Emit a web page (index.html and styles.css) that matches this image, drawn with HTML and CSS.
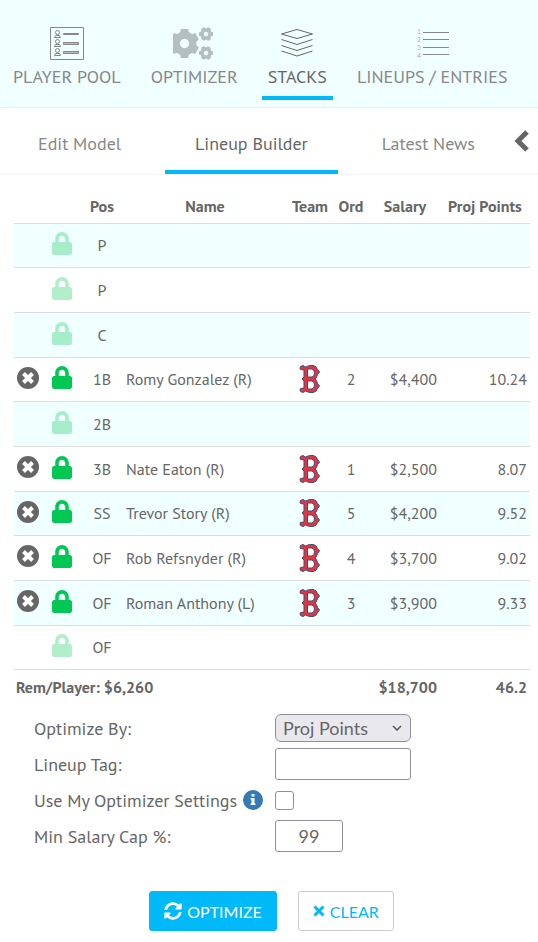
FILE: index.html
```
<!DOCTYPE html>
<html lang="en">
    <head>
        <meta charset="utf-8" />
        <meta name="viewport" content="width=device-width, initial-scale=1" />
        <title>Stacks - Lineup Builder</title>
        <link rel="stylesheet" href="styles.css">
    </head>

    <body>
        <svg class="sprite" aria-hidden="true">
            <symbol id="lock" viewBox="0 0 448 512">
                <path d="M400 224h-24v-72C376 68.2 307.8 0 224 0S72 68.2 72 152v72H48c-26.5 0-48 21.5-48 48v192c0 26.5 21.5 48 48 48h352c26.5 0 48-21.5 48-48V272c0-26.5-21.5-48-48-48zm-104 0H152v-72c0-39.7 32.3-72 72-72s72 32.3 72 72v72z" />
            </symbol>
            <symbol id="remove" viewBox="0 0 22 22">
                <circle cx="11" cy="11" r="11" />
                <path d="M6.5 6.5l9 9M15.5 6.5l-9 9" stroke="#fff" stroke-width="4" />
            </symbol>
            <symbol id="bos" viewBox="0 0 22 30">
                <path d="M1.5 2.5L4 1.5 6.5 3Q10 1 14 1.5 17.5 2 18.5 5.5L20.5 8 18.5 10.5Q18 13.5 16 15 18 16.5 18.5 19.5L20.5 22 18.5 24.5Q17.5 28 14 28.5 10 29 6.5 27L4 28.5 1.5 27.5Q.5 25 1.5 24.5L5 24V17L3 15 5 13V6L1.5 5.5Q.5 4.5 1.5 2.5zM8.5 5V13H13Q15.5 12 15.5 9 15.5 6 13 5zM8.5 17V25H13Q15.5 24 15.5 21 15.5 18 13 17z" fill="#e5343f" fill-rule="evenodd" stroke="#35507d" stroke-linejoin="round" />
            </symbol>
            <symbol id="gear" viewBox="-14 -14 28 28">
                <circle r="8" fill="none" stroke="#b4bfc0" stroke-width="7" />
                <path d="M-3.5-14h7l1 5h-9zM-3.5 14h7l1-5h-9z" />
                <path d="M-3.5-14h7l1 5h-9zM-3.5 14h7l1-5h-9z" transform="rotate(60)" />
                <path d="M-3.5-14h7l1 5h-9zM-3.5 14h7l1-5h-9z" transform="rotate(120)" />
            </symbol>
        </svg>

        <nav class="main-nav">
            <a class="nav-item" href="#pool">
                <svg class="nav-icon" viewBox="0 0 42 36" fill="none" stroke="#888">
                    <path d="M4.5 2.5h33v32h-33z" />
                    <circle cx="11.5" cy="7.5" r="2" />
                    <path d="M8.5 12.5l1-2h4l1 2z" />
                    <circle cx="11.5" cy="16.5" r="2" />
                    <path d="M8.5 21.5l1-2h4l1 2z" />
                    <circle cx="11.5" cy="25.5" r="2" />
                    <path d="M8.5 30.5l1-2h4l1 2z" />
                    <path d="M17.5 8.5h15v1h-15zM17.5 17.5h15v2h-15zM17.5 26.5h15v2h-15z" fill="#bbb" />
                </svg>
                PLAYER POOL
            </a>
            <a class="nav-item" href="#optimizer">
                <svg class="nav-icon" viewBox="3 0 42 36" fill="#b4bfc0">
                    <use href="#gear" x="0" y="4" width="29" height="29" />
                    <use href="#gear" x="-7" y="-7" width="14" height="14" transform="translate(36 9) rotate(30)" />
                    <use href="#gear" x="-7" y="-7" width="14" height="14" transform="translate(36 28) rotate(30)" />
                </svg>
                OPTIMIZER
            </a>
            <a class="nav-item active" href="#stacks">
                <svg class="nav-icon" viewBox="0 0 42 36" fill="none" stroke="#666">
                    <path d="M21 4.5l15.5 4.5L21 13.5 5.5 9zM5.5 14.5L21 19.5l15.5-5M5.5 20.5L21 25.5l15.5-5M5.5 26L21 31l15.5-5" />
                </svg>
                STACKS
            </a>
            <a class="nav-item" href="#lineups">
                <svg class="nav-icon" viewBox="0 0 42 36" stroke="#888">
                    <path d="M12 7.5h26M12 14.5h26M12 22.5h26M12 29.5h26" />
                    <g class="nav-digits">
                        <text x="6" y="9">1</text>
                        <text x="6" y="17">2</text>
                        <text x="6" y="25">3</text>
                        <text x="6" y="33">4</text>
                    </g>
                </svg>
                LINEUPS / ENTRIES
            </a>
        </nav>

        <main class="panel">
            <nav class="tabs">
                <a class="tab" href="#model">Edit Model</a>
                <a class="tab active" href="#builder">Lineup Builder</a>
                <a class="tab" href="#news">Latest News</a>
                <button class="collapse" type="button" aria-label="Collapse">
                    <svg viewBox="0 0 16 24" width="16" height="24"><path d="M13 3L4 12l9 9" fill="none" stroke="#666" stroke-width="5" /></svg>
                </button>
            </nav>

            <table class="lineup">
                <colgroup>
                    <col class="col-remove"><col class="col-lock"><col class="col-pos"><col>
                    <col class="col-team"><col class="col-ord"><col class="col-salary"><col class="col-points">
                </colgroup>
                <thead>
                    <tr><th></th><th></th><th>Pos</th><th>Name</th><th>Team</th><th>Ord</th><th>Salary</th><th>Proj Points</th></tr>
                </thead>
                <tbody id="players"></tbody>
                <tfoot>
                    <tr><td colspan="6">Rem/Player: $6,260</td><td class="num">$18,700</td><td class="num">46.2</td></tr>
                </tfoot>
            </table>

            <form class="settings">
                <label for="optimize-by">Optimize By:</label>
                <div class="select-wrap">
                    <select id="optimize-by"><option>Proj Points</option></select>
                    <svg class="caret" viewBox="0 0 10 6" width="10" height="6"><path d="M1 1l4 4 4-4" fill="none" stroke="#555" stroke-width="1.5" /></svg>
                </div>
                <label for="lineup-tag">Lineup Tag:</label>
                <input id="lineup-tag" class="text-box" type="text">
                <div class="label-info">
                    <label for="use-settings">Use My Optimizer Settings</label>
                    <svg class="info" viewBox="0 0 20 20" width="20" height="20">
                        <circle cx="10" cy="10" r="10" fill="#337ab7" />
                        <path d="M8.5 4h3v2.5h-3zM7.5 8h4v5.5h1V15h-5v-1.5h1v-4h-1z" fill="#fff" />
                    </svg>
                </div>
                <input id="use-settings" class="check" type="checkbox">
                <label for="min-cap">Min Salary Cap %:</label>
                <input id="min-cap" class="text-box short" type="text" value="99">
            </form>

            <div class="actions">
                <button class="btn primary" type="button">
                    <svg viewBox="0 0 512 512" width="18" height="18" fill="currentColor"><path d="M370.72 133.28C339.458 104.008 298.888 87.962 255.848 88c-77.458.068-144.328 53.178-162.791 126.85-1.344 5.363-6.122 9.15-11.651 9.15H24.103c-7.498 0-13.194-6.807-11.807-14.176C33.933 94.924 134.813 8 256 8c66.448 0 126.791 26.136 171.315 68.685L463.03 40.97C478.149 25.851 504 36.559 504 57.941V192c0 13.255-10.745 24-24 24H345.941c-21.382 0-32.09-25.851-16.971-40.971l41.75-41.749zM32 296h134.059c21.382 0 32.09 25.851 16.971 40.971l-41.75 41.75c31.262 29.273 71.835 45.319 114.876 45.28 77.418-.07 144.315-53.144 162.787-126.849 1.344-5.363 6.122-9.15 11.651-9.15h57.304c7.498 0 13.194 6.807 11.807 14.176C478.067 417.076 377.187 504 256 504c-66.448 0-126.791-26.136-171.315-68.685L48.97 471.03C33.851 486.149 8 475.441 8 454.059V320c0-13.255 10.745-24 24-24z" /></svg>
                    OPTIMIZE
                </button>
                <button class="btn" type="button">
                    <svg viewBox="0 0 12 12" width="12" height="12"><path d="M1.5 1.5l9 9M10.5 1.5l-9 9" stroke="currentColor" stroke-width="3" /></svg>
                    CLEAR
                </button>
            </div>
        </main>

        <script src="lineup.js"></script>
    </body>
</html>
```
FILE: styles.css
```
* {
    box-sizing: border-box;
}
body {
    margin: 0;
    background: #f0ffff;
    color: #666;
    font-family: "PT Sans", Lato, sans-serif;
    font-size: 16px;
}
a {
    color: #888;
    text-decoration: none;
}
.sprite {
    display: none;
}
.main-nav {
    display: flex;
    gap: 18px;
    height: 107px;
    padding: 25px 7px 7px;
    font-size: 18px;
    line-height: 24px;
    white-space: nowrap;
}
.nav-item {
    display: flex;
    flex-direction: column;
    align-items: center;
    gap: 4px;
    padding: 0 6px;
    border-bottom: 4px solid transparent;
}
.nav-icon {
    width: 42px;
    height: 36px;
}
.nav-digits {
    font-size: 7px;
    fill: #aaa;
    stroke: none;
}
.main-nav .active,
.tabs .active {
    color: #666;
    border-color: #00b9f9;
}
.panel {
    background: #fff;
    border-top: 1px solid #e8eeee;
    border-radius: 4px 0 0 0;
    padding-bottom: 11px;
}
.tabs {
    display: flex;
    gap: 14px;
    height: 67px;
    padding-left: 8px;
    border-bottom: 1px solid #f3f3f3;
    font-size: 18px;
    white-space: nowrap;
}
.tab {
    padding: 24px 30px 0;
    line-height: 24px;
    border-bottom: 4px solid transparent;
}
.tab:last-of-type {
    padding-right: 22px;
}
.collapse {
    align-self: center;
    display: flex;
    margin: 0 8px 0 auto;
    padding: 0;
    border: 0;
    background: none;
}
.lineup {
    width: calc(100% - 22px);
    margin: 16px 8px 0 14px;
    table-layout: fixed;
    border-collapse: collapse;
    line-height: 20px;
}
.col-remove { width: 28px; }
.col-lock { width: 40px; }
.col-pos { width: 40px; }
.col-team { width: 44px; }
.col-ord { width: 38px; }
.col-salary { width: 70px; }
.col-points { width: 90px; }
.lineup th,
.lineup td {
    padding: 0;
    text-align: center;
    white-space: nowrap;
}
.lineup th {
    height: 32px;
    padding-bottom: 2px;
}
.lineup tbody tr {
    height: 45px;
    border-top: 1px solid #ddd;
}
.lineup tbody tr:nth-child(3n + 1) {
    height: 44px;
}
.lineup tbody tr:nth-child(odd) {
    background: #f0ffff;
}
.lineup tbody .name {
    padding-left: 4px;
    text-align: left;
}
.lineup .num {
    padding-right: 3px;
    text-align: right;
}
.lineup tfoot td {
    height: 36px;
    border-top: 1px solid #ddd;
    font-weight: bold;
}
.lineup tfoot td:first-child {
    padding-left: 2px;
    text-align: left;
}
.icon-btn {
    display: block;
    margin: 0 auto;
    padding: 0 0 3px;
    border: 0;
    background: none;
    fill: #666;
}
.icon-btn svg,
.logo {
    display: block;
    margin: 0 auto;
}
.lock {
    fill: #00c853;
}
.lock.open {
    opacity: 0.3;
}
.settings {
    display: grid;
    grid-template-columns: 241px 1fr;
    grid-auto-rows: 36px;
    align-items: center;
    justify-items: start;
    margin: 5px 34px 0;
    font-size: 18px;
}
.label-info {
    display: flex;
    align-items: center;
    gap: 6px;
}
.select-wrap {
    display: grid;
    align-items: center;
    width: 136px;
}
.select-wrap > * {
    grid-area: 1 / 1;
}
.settings select,
.text-box {
    width: 136px;
    height: 32px;
    padding: 0 7px;
    border: 1px solid #8f8f9d;
    border-radius: 3px;
    background: #fff;
    color: #666;
    font-family: Lato, sans-serif;
    font-size: 18px;
}
.settings select {
    height: 28px;
    border-radius: 6px;
    background: #e9e9ed;
    appearance: none;
}
.caret {
    justify-self: end;
    margin-right: 9px;
    pointer-events: none;
}
.text-box.short {
    width: 68px;
    text-align: center;
}
.check {
    width: 19px;
    height: 19px;
    margin: 0;
    border: 1px solid #8f8f9d;
    border-radius: 3px;
    appearance: none;
}
.actions {
    display: flex;
    justify-content: center;
    gap: 21px;
    margin: 37px 0 0 5px;
}
.btn {
    display: flex;
    align-items: center;
    gap: 5px;
    height: 40px;
    padding: 0 14px;
    border: 1px solid #ccc;
    border-radius: 3px;
    background: #fff;
    color: #00b9f9;
    font-family: Lato, sans-serif;
    font-size: 16px;
}
.btn.primary {
    border-color: #00b9f9;
    background: #00b9f9;
    color: #fff;
}
```
FILE: lineup.js
```
const players = [
    { pos: 'P' },
    { pos: 'P' },
    { pos: 'C' },
    { pos: '1B', name: 'Romy Gonzalez (R)', ord: 2, salary: '$4,400', points: '10.24' },
    { pos: '2B' },
    { pos: '3B', name: 'Nate Eaton (R)', ord: 1, salary: '$2,500', points: '8.07' },
    { pos: 'SS', name: 'Trevor Story (R)', ord: 5, salary: '$4,200', points: '9.52' },
    { pos: 'OF', name: 'Rob Refsnyder (R)', ord: 4, salary: '$3,700', points: '9.02' },
    { pos: 'OF', name: 'Roman Anthony (L)', ord: 3, salary: '$3,900', points: '9.33' },
    { pos: 'OF' }
];

const icon = (id, w, h, cls = '') => `<svg class="${cls}" width="${w}" height="${h}"><use href="#${id}"/></svg>`;

document.getElementById('players').innerHTML = players.map(p => `
    <tr>
        <td>${p.name ? `<button class="icon-btn" type="button" aria-label="Remove">${icon('remove', 22, 22)}</button>` : ''}</td>
        <td><button class="icon-btn lock ${p.name ? '' : 'open'}" type="button" aria-label="Lock">${icon('lock', 20, 23)}</button></td>
        <td>${p.pos}</td>
        <td class="name">${p.name || ''}</td>
        <td>${p.name ? icon('bos', 22, 30, 'logo') : ''}</td>
        <td>${p.ord || ''}</td>
        <td class="num">${p.salary || ''}</td>
        <td class="num">${p.points || ''}</td>
    </tr>`).join('');
```
